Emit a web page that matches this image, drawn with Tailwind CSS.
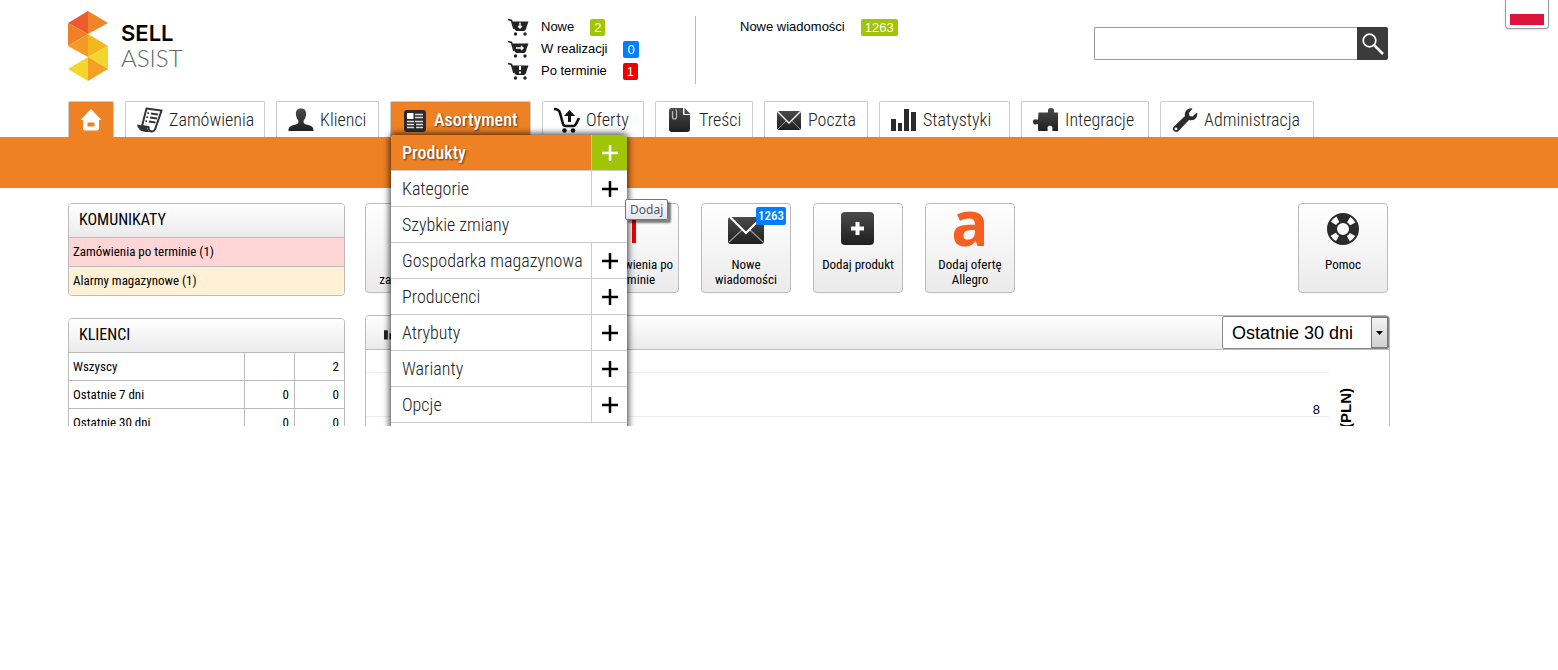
<!DOCTYPE html>
<html lang="pl">
  <head>
    <meta charset="UTF-8" />
    <meta name="viewport" content="width=device-width, initial-scale=1.0" />
    <title>Sellasist</title>
    <script src="https://cdn.jsdelivr.net/npm/@tailwindcss/browser@4"></script>
  </head>
  <body class="bg-white text-black font-['Roboto_Condensed','Roboto',sans-serif]">
    <!-- shared icons -->
    <svg class="absolute size-0">
      <symbol id="plus" viewBox="0 0 16 16">
        <path d="M8 0v16M0 8h16" fill="none" stroke="currentColor" stroke-width="2.500" />
      </symbol>
      <symbol id="cart" viewBox="0 0 21 18">
        <path d="M0 1.500l3.500 1L6 11" fill="none" stroke="#222" stroke-width="1.600" />
        <path d="M4 3.500h16.500L18.500 9q-.5 4-3 4H9q-2.500 0-3-4z" fill="#222" />
        <circle cx="7.500" cy="16" r="1.700" fill="#222" />
        <circle cx="17" cy="16" r="1.700" fill="#222" />
      </symbol>
      <symbol id="bars" viewBox="0 0 26 24">
        <path d="M0 11h5v12H0zM7 15h4v8H7zM13 1h5v22h-5zM20 4h5v19h-5z" fill="currentColor" />
      </symbol>
      <linearGradient id="dark" x1="0" y1="0" x2="0" y2="1">
        <stop offset="0" stop-color="#4a4a4a" />
        <stop offset="1" stop-color="#1f1f1f" />
      </linearGradient>
    </svg>

    <div class="relative max-h-[426px] overflow-hidden">
      <button aria-label="Polski" class="absolute top-0 right-[9px] w-11 h-[29px] border border-t-0 border-[#999] rounded-b-sm bg-white shadow-sm px-1 pt-3.5 pb-1">
        <span class="block h-[11px] bg-[#dc143c]"></span>
      </button>

      <header class="flex h-[101px] pl-17 pr-[170px]">
        <a href="#" class="flex w-[440px] pt-[11px]">
          <svg class="w-10 h-[70px]" viewBox="0 0 40 70">
            <path d="M20 0L0 12l20 11z" fill="#ee5a30" />
            <path d="M20 0v23l20-11z" fill="#f08427" />
            <path d="M0 12v23l20-12z" fill="#f07f28" />
            <path d="M0 35l20-12v23z" fill="#f29a24" />
            <path d="M20 23l20 12-20 11z" fill="#f4b81f" />
            <path d="M40 35v23L20 46z" fill="#f2d62b" />
            <path d="M20 46L0 58l20 12z" fill="#f2d62b" />
            <path d="M20 46l20 12-20 12z" fill="#f5a024" />
            <path d="M0 12l20 11 20-11-20 11z" fill="#f07f28" />
          </svg>
          <span class="ml-[13px] mt-2.5 flex flex-col">
            <span class="font-['Inter'] text-[22px] leading-6 font-semibold">SELL</span>
            <span class="font-['Lato'] text-2xl leading-[26px] font-light text-[#666]">ASIST</span>
          </span>
        </a>

        <div class="mt-4 h-[68px] w-[188px] border-r border-[#bbb] font-['Liberation_Sans'] text-[13px] leading-[22px]">
          <a href="#" class="flex items-center">
            <svg class="w-[21px] h-[18px] mr-3" viewBox="0 0 21 18"><use href="#cart" /><path d="M12 4.500v5.500M10 8l2 2 2-2" fill="none" stroke="#fff" stroke-width="1.400" /></svg>
            Nowe <span class="ml-4 rounded-xs bg-[#a0c406] px-1 leading-[17px] text-white">2</span>
          </a>
          <a href="#" class="flex items-center">
            <svg class="w-[21px] h-[18px] mr-3" viewBox="0 0 21 18"><use href="#cart" /><path d="M8 8h7M13 6l2 2-2 2" fill="none" stroke="#fff" stroke-width="1.400" /></svg>
            W realizacji <span class="ml-4 rounded-xs bg-[#007fff] px-1 leading-[17px] text-white">0</span>
          </a>
          <a href="#" class="flex items-center">
            <svg class="w-[21px] h-[18px] mr-3" viewBox="0 0 21 18"><use href="#cart" /><path d="M12 4v4M12 9.500v2" fill="none" stroke="#fff" stroke-width="2" /></svg>
            Po terminie <span class="ml-4 rounded-xs bg-[#ee0000] px-1 leading-[17px] text-white">1</span>
          </a>
        </div>

        <a href="#" class="mt-4 ml-11 flex h-[22px] items-center font-['Liberation_Sans'] text-[13px]">
          Nowe wiadomości <span class="ml-4 rounded-xs bg-[#a0c406] px-1 leading-[17px] text-white">1263</span>
        </a>

        <form class="mt-[27px] ml-auto flex h-[33px] w-[294px]">
          <input type="search" aria-label="Szukaj" class="min-w-0 flex-1 rounded-l-xs border border-r-0 border-[#999] px-2 outline-none" />
          <button type="button" aria-label="Szukaj" class="flex w-[31px] items-center justify-center rounded-r-xs bg-[#3b3b3b]">
            <svg class="size-[22px]" viewBox="0 0 22 22" fill="none" stroke="#fff"><circle cx="7.500" cy="7.500" r="6.300" stroke-width="1.700" /><path d="M12 12l9 9" stroke-width="2.500" /></svg>
          </button>
        </form>
      </header>

      <nav class="relative z-10 flex h-9 gap-[11px] pl-17 text-lg text-[#222]">
        <a href="#" aria-label="Start" class="flex w-[46px] items-center justify-center rounded-t-xs border border-b-0 border-[#ccc] bg-[#ef8125]">
          <svg class="size-[22px]" viewBox="0 0 22 22"><path d="M11 0l10.500 11H19v8.500q0 2-2 2H5q-2 0-2-2V11H.5zM7.500 13.500v4h7v-4z" fill="#fff" fill-rule="evenodd" /></svg>
        </a>
        <a href="#" class="flex w-[140px] items-center gap-1.5 rounded-t-xs border border-b-0 border-[#ccc] pl-[11px] font-light">
          <svg class="size-[26px] shrink-0" viewBox="0 0 26 26">
            <path d="M9.500 1.500l15 2-6.500 19q-2 3-5 1.500-1.500-1-1.500-4L5 19z" fill="#fff" stroke="#333" stroke-width="2" />
            <path d="M0 17.500l10 2q.5 5 4 5.500-8 .5-11-2T0 17.500z" fill="#333" />
            <path d="M10.500 6l1.500.3M14 6.500l7 1M9.500 10l1.500.3M13 10.500l7 1M8.500 14l1.500.3M12 14.500l6.500 1" stroke="#333" stroke-width="1.800" />
          </svg>
          Zamówienia
        </a>
        <a href="#" class="flex w-[103px] items-center gap-1.5 rounded-t-xs border border-b-0 border-[#ccc] pl-[11px] font-light">
          <svg class="size-[26px] shrink-0" viewBox="0 0 26 26"><path d="M13 1.500c4 0 5.500 2.500 5 6.500-.3 3-1.500 4.500-2.500 6 0 3 1 3 5 4 4 1.200 5 2.500 5 6H.5c0-3.500 1-4.800 5-6 4-1 5-1 5-4-1-1.500-2.200-3-2.500-6-.5-4 1-6.500 5-6.500z" fill="url(#dark)" /></svg>
          Klienci
        </a>

        <div class="relative w-[141px]">
          <a href="#" class="flex h-full items-center gap-1.5 rounded-t-xs border border-b-0 border-[#ccc] bg-[#ef8125] pl-[11px] font-medium text-white text-shadow-[1px_1px_2px_#00000099]">
            <svg class="size-[26px] shrink-0" viewBox="0 0 26 26">
              <rect x="2" y="3" width="22" height="22" rx="3" fill="#2b2b2b" />
              <path d="M5 6h6.500v6H5z" fill="#fff" />
              <path d="M13 7.500h8M13 10.500h8M5 14.500h7M13 14.500h8M5 17.500h7M14 17.500h7M5 20.500h7M14 20.500h7" stroke="#ddd" stroke-width="1.300" />
            </svg>
            Asortyment
          </a>
          <ul class="absolute top-[34px] left-px w-[236px] rounded-t bg-white leading-[35px] font-light whitespace-nowrap shadow-[0_0_7px_1px_#000000cc]">
            <li class="flex h-9 border-b border-[#ccc]">
              <a href="#" class="flex-1 rounded-tl bg-[#ef8125] pl-[11px] font-medium text-white text-shadow-[1px_1px_2px_#00000099]">Produkty</a>
              <a href="#" aria-label="Dodaj" class="flex w-9 items-center justify-center rounded-tr border-l border-[#ccc] bg-[#a0c406] text-white"><svg class="size-4"><use href="#plus" /></svg></a>
            </li>
            <li class="flex h-9 border-b border-[#ccc]">
              <a href="#" class="flex-1 pl-[11px]">Kategorie</a>
              <a href="#" aria-label="Dodaj" class="flex w-9 items-center justify-center border-l border-[#ccc] text-black"><svg class="size-4"><use href="#plus" /></svg></a>
            </li>
            <li class="flex h-9 border-b border-[#ccc]">
              <a href="#" class="flex-1 pl-[11px]">Szybkie zmiany</a>
            </li>
            <li class="flex h-9 border-b border-[#ccc]">
              <a href="#" class="flex-1 pl-[11px]">Gospodarka magazynowa</a>
              <a href="#" aria-label="Dodaj" class="flex w-9 items-center justify-center border-l border-[#ccc] text-black"><svg class="size-4"><use href="#plus" /></svg></a>
            </li>
            <li class="flex h-9 border-b border-[#ccc]">
              <a href="#" class="flex-1 pl-[11px]">Producenci</a>
              <a href="#" aria-label="Dodaj" class="flex w-9 items-center justify-center border-l border-[#ccc] text-black"><svg class="size-4"><use href="#plus" /></svg></a>
            </li>
            <li class="flex h-9 border-b border-[#ccc]">
              <a href="#" class="flex-1 pl-[11px]">Atrybuty</a>
              <a href="#" aria-label="Dodaj" class="flex w-9 items-center justify-center border-l border-[#ccc] text-black"><svg class="size-4"><use href="#plus" /></svg></a>
            </li>
            <li class="flex h-9 border-b border-[#ccc]">
              <a href="#" class="flex-1 pl-[11px]">Warianty</a>
              <a href="#" aria-label="Dodaj" class="flex w-9 items-center justify-center border-l border-[#ccc] text-black"><svg class="size-4"><use href="#plus" /></svg></a>
            </li>
            <li class="flex h-9 border-b border-[#ccc]">
              <a href="#" class="flex-1 pl-[11px]">Opcje</a>
              <a href="#" aria-label="Dodaj" class="flex w-9 items-center justify-center border-l border-[#ccc] text-black"><svg class="size-4"><use href="#plus" /></svg></a>
            </li>
            <li class="h-9"></li>
          </ul>
          <div role="tooltip" class="absolute top-[98px] left-[235px] rounded-xs border border-[#767676] bg-linear-to-b from-white to-[#e4e5f0] px-1 font-['Noto_Sans'] text-xs leading-[19px] text-[#575757] shadow-[3px_3px_2px_#00000080]">Dodaj</div>
        </div>

        <a href="#" class="flex w-[102px] items-center gap-1.5 rounded-t-xs border border-b-0 border-[#ccc] pl-[11px] font-light">
          <svg class="size-[26px] shrink-0" viewBox="0 0 26 26" fill="none" stroke="#111">
            <path d="M0 2q5 0 6 4l3 11q.5 2 3 2h7q2 0 3-2l3-6" stroke-width="2.600" />
            <path d="M15.500 15V7" stroke-width="3" />
            <path d="M10 9l5.500-6L21 9z" fill="#111" stroke="none" />
            <circle cx="10.500" cy="23.500" r="2.300" fill="#111" stroke="none" />
            <circle cx="19" cy="23.500" r="2.300" fill="#111" stroke="none" />
          </svg>
          Oferty
        </a>
        <a href="#" class="flex w-[98px] items-center gap-1.5 rounded-t-xs border border-b-0 border-[#ccc] pl-[11px] font-light">
          <svg class="size-[26px] shrink-0" viewBox="0 0 26 26">
            <path d="M5 1h11v6q0 1 1 1h6v14q0 3-3 3H5q-3 0-3-3V4q0-3 3-3z" fill="url(#dark)" />
            <path d="M17.500 1l6 6h-6z" fill="#444" />
            <path d="M5.500 4v6q0 2 2 2t2-2V4q0-1.500-1.200-1.500" fill="none" stroke="#bbb" stroke-width="1.200" />
          </svg>
          Treści
        </a>
        <a href="#" class="flex w-[104px] items-center gap-1.5 rounded-t-xs border border-b-0 border-[#ccc] pl-[11px] font-light">
          <svg class="size-[26px] shrink-0" viewBox="0 0 26 26">
            <rect x="1" y="4" width="24" height="19" rx="2" fill="url(#dark)" />
            <path d="M1.500 4.500L13 16 24.500 4.500" fill="none" stroke="#fff" stroke-width="1.400" />
            <path d="M2 22l8-8M24 22l-8-8" stroke="#999" stroke-width="1" />
          </svg>
          Poczta
        </a>
        <a href="#" class="flex w-[131px] items-center gap-1.5 rounded-t-xs border border-b-0 border-[#ccc] pl-[11px] font-light">
          <svg class="size-[26px] shrink-0 text-[#2b2b2b]"><use href="#bars" /></svg>
          Statystyki
        </a>
        <a href="#" class="flex w-[128px] items-center gap-1.5 rounded-t-xs border border-b-0 border-[#ccc] pl-[11px] font-light">
          <svg class="size-[26px] shrink-0" viewBox="0 0 26 26"><path d="M5.500 5.500h9q1 0 .5-1.500-.5-3 3-3t3 3q-.5 1.500.5 1.500h3.500v18.500h-5q-1 0-.7-1.300 1-4-2.300-4t-2.300 4q.3 1.300-.7 1.300H6q-1 0-1-1v-5q0-1.200-1.300-.8Q0 18.500 0 15t3.700-2.500Q5 13 5 12z" fill="url(#dark)" /></svg>
          Integracje
        </a>
        <a href="#" class="flex w-[154px] items-center gap-1.5 rounded-t-xs border border-b-0 border-[#ccc] pl-[11px] font-light">
          <svg class="size-[26px] shrink-0" viewBox="0 0 26 26"><path d="M20.500 1.500L17 6l.5 3 3 .5L25 5.500q1 4-2 6.500-2.500 2-6 1L6.500 24q-2 2-4.500 0t0-4.500L13 9q-1-3 1.500-5.700 2.500-2.500 6-1.800zM4 20.500a1.400 1.400 0 100 2.800 1.400 1.400 0 000-2.800z" fill="#2b2b2b" fill-rule="evenodd" /></svg>
          Administracja
        </a>
      </nav>
      <div class="h-[51px] border-b border-[#d8843c] bg-[#ef8125]"></div>

      <main class="flex gap-5 pt-[15px] pl-17 pr-[170px]">
        <aside class="w-[277px] shrink-0 text-[13px]">
          <section class="mb-[22px] overflow-hidden rounded border border-[#bbb]">
            <h2 class="h-[34px] border-b border-[#bbb] bg-linear-to-b from-white to-[#ebebeb] pl-2.5 text-base leading-8">KOMUNIKATY</h2>
            <a href="#" class="block h-[29px] border-b border-[#bbb] bg-[#ffd6d6] pl-1 leading-7">Zamówienia po terminie (1)</a>
            <a href="#" class="block h-7 bg-[#fff0d6] pl-1 leading-7">Alarmy magazynowe (1)</a>
          </section>
          <section class="overflow-hidden rounded-t border border-[#bbb]">
            <h2 class="h-[34px] border-b border-[#bbb] bg-linear-to-b from-white to-[#ebebeb] pl-2.5 text-base leading-8">KLIENCI</h2>
            <table class="w-full table-fixed border-separate border-spacing-0">
              <tbody>
                <tr>
                  <td class="h-7 border-b border-[#bbb] pl-1">Wszyscy</td>
                  <td class="w-[50px] border-b border-l border-[#bbb] pr-[5px] text-right"></td>
                  <td class="w-[50px] border-b border-l border-[#bbb] pr-[5px] text-right">2</td>
                </tr>
                <tr>
                  <td class="h-7 border-b border-[#bbb] pl-1">Ostatnie 7 dni</td>
                  <td class="border-b border-l border-[#bbb] pr-[5px] text-right">0</td>
                  <td class="border-b border-l border-[#bbb] pr-[5px] text-right">0</td>
                </tr>
                <tr>
                  <td class="h-7 border-b border-[#bbb] pl-1">Ostatnie 30 dni</td>
                  <td class="border-b border-l border-[#bbb] pr-[5px] text-right">0</td>
                  <td class="border-b border-l border-[#bbb] pr-[5px] text-right">0</td>
                </tr>
              </tbody>
            </table>
          </section>
        </aside>

        <div class="min-w-0 flex-1">
          <div class="mb-[22px] flex gap-[22px] text-center text-[13px] leading-[15px]">
            <a href="#" class="flex h-[90px] w-[90px] flex-col items-center rounded border border-[#bbb] bg-linear-to-b from-white to-[#ebebeb] pt-[7px]">
              <span class="mb-2.5 size-9 shrink-0"></span>
              <span>Nowe<br />zamówienia</span>
            </a>
            <a href="#" class="flex h-[90px] w-[90px] flex-col items-center rounded border border-[#bbb] bg-linear-to-b from-white to-[#ebebeb] pt-[7px]"></a>
            <a href="#" class="flex h-[90px] w-[90px] flex-col items-center rounded border border-[#bbb] bg-linear-to-b from-white to-[#ebebeb] pt-[7px]">
              <svg class="mb-2.5 size-9 shrink-0" viewBox="0 0 36 36"><path d="M16 0h4v32h-4z" fill="#ee0000" /></svg>
              <span>Zamówienia po<br />terminie</span>
            </a>
            <a href="#" class="relative flex h-[90px] w-[90px] flex-col items-center rounded border border-[#bbb] bg-linear-to-b from-white to-[#ebebeb] pt-[7px]">
              <svg class="mb-2.5 size-9 shrink-0" viewBox="0 0 36 36">
                <rect x="0" y="6" width="36" height="27" rx="3" fill="url(#dark)" />
                <path d="M1 31l13-12M35 31L22 19" stroke="#999" stroke-width="1.200" />
                <path d="M2 6l16 16L34 6" fill="none" stroke="#fff" stroke-width="2" />
              </svg>
              <span>Nowe<br />wiadomości</span>
              <span class="absolute top-[3px] right-1 rounded-xs bg-[#007fff] px-0.5 leading-[18px] font-medium text-white">1263</span>
            </a>
            <a href="#" class="flex h-[90px] w-[90px] flex-col items-center rounded border border-[#bbb] bg-linear-to-b from-white to-[#ebebeb] pt-[7px]">
              <svg class="mb-2.5 size-9 shrink-0" viewBox="0 0 36 36">
                <rect x="1" y="1" width="33" height="33" rx="4" fill="url(#dark)" />
                <path d="M17.500 11v13M11 17.500h13" stroke="#fff" stroke-width="4" />
              </svg>
              Dodaj produkt
            </a>
            <a href="#" class="flex h-[90px] w-[90px] flex-col items-center rounded border border-[#bbb] bg-linear-to-b from-white to-[#ebebeb] pt-[7px]">
              <span class="mb-2.5 flex h-9 items-end font-['Open_Sans'] text-[62px] leading-[50px] font-bold text-[#f55f22]">a</span>
              <span>Dodaj ofertę<br />Allegro</span>
            </a>
            <a href="#" class="ml-auto flex h-[90px] w-[90px] flex-col items-center rounded border border-[#bbb] bg-linear-to-b from-white to-[#ebebeb] pt-[7px]">
              <svg class="mb-2.5 size-9 shrink-0" viewBox="0 0 36 36" fill="none">
                <circle cx="18" cy="18" r="11" stroke="#2b2b2b" stroke-width="10" />
                <circle cx="18" cy="18" r="11" stroke="#fff" stroke-width="6" stroke-dasharray="6 11.280" stroke-dashoffset="-5.640" />
              </svg>
              Pomoc
            </a>
          </div>

          <section class="-mr-0.5 rounded-t border border-[#bbb]">
            <div class="flex h-[34px] items-center justify-between rounded-t border-b border-[#bbb] bg-linear-to-b from-white to-[#ebebeb] pl-[18px]">
              <svg class="mb-1 size-5 text-[#222]" viewBox="0 0 26 24"><use href="#bars" /></svg>
              <label class="relative block h-[33px] w-[167px]">
                <select aria-label="Okres" class="h-full w-full appearance-none rounded-xs border border-[#888] bg-white pl-[9px] font-['Liberation_Sans'] text-lg leading-[30px]">
                  <option>Ostatnie 30 dni</option>
                </select>
                <span class="pointer-events-none absolute inset-y-px right-px flex w-[17px] items-center justify-center border border-[#777] bg-linear-to-b from-[#f4f4f4] to-[#d0d0d0]">
                  <svg class="h-1 w-[7px]" viewBox="0 0 7 4"><path d="M0 0h7L3.500 4z" /></svg>
                </span>
              </label>
            </div>
            <!-- chart: grid lines, right axis label and its title -->
            <div class="flex pt-[22px] pr-9 font-['Liberation_Sans']">
              <div class="flex-1">
                <div class="flex h-[45px] items-end justify-end border-y border-[#eee] pr-2.5 text-[13px] leading-[13px]">8</div>
              </div>
              <div class="mt-4 ml-2 h-[60px] rotate-180 text-right text-[15px] leading-[15px] font-bold [writing-mode:vertical-rl]">(PLN)</div>
            </div>
          </section>
        </div>
      </main>
    </div>
  </body>
</html>
